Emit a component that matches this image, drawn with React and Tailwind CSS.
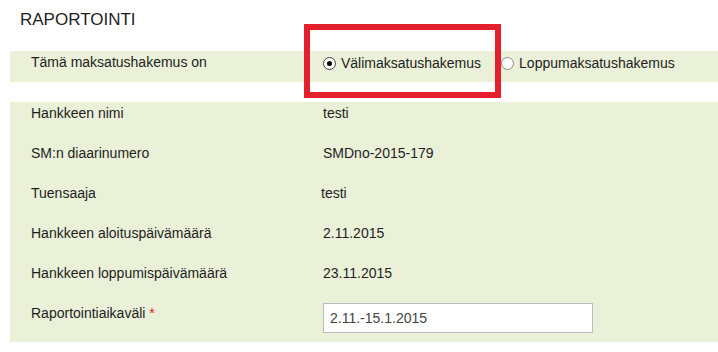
import React from 'react';

const rows = [
  { label: 'Hankkeen nimi', value: 'testi' },
  { label: 'SM:n diaarinumero', value: 'SMDno-2015-179' },
  { label: 'Tuensaaja', value: 'testi', shift: true },
  { label: 'Hankkeen aloituspäivämäärä', value: '2.11.2015' },
  { label: 'Hankkeen loppumispäivämäärä', value: '23.11.2015' },
];

function Radio({ checked, label, className }) {
  return (
    <label className={`flex items-center ${className || ''}`}>
      <span
        className={`flex h-[13px] w-[13px] items-center justify-center rounded-full border bg-white ${
          checked ? 'border-[#444]' : 'border-[#8c8c8c]'
        }`}
      >
        {checked && <span className="h-[5px] w-[5px] rounded-full bg-black" />}
      </span>
      <span className="ml-[5px]">{label}</span>
    </label>
  );
}

export default function App() {
  return (
    <div className="relative h-[352px] w-[718px] overflow-hidden bg-white font-['Liberation_Sans',Arial,sans-serif] text-[14px] leading-[16px] text-[#1e1e1e]">
      <h2 className="pl-[20px] pt-[10px] text-[17px] leading-[20px] font-normal">RAPORTOINTI</h2>

      {/* payment type */}
      <div className="ml-[10px] mt-[21px] flex h-[31px] items-start bg-[#eaf1d8] pl-[21px] pt-[3px]">
        <div className="w-[292px]">Tämä maksatushakemus on</div>
        <div className="mt-[1px] flex items-center">
          <Radio checked label="Välimaksatushakemus" />
          <Radio label="Loppumaksatushakemus" className="ml-[20px]" />
        </div>
      </div>

      {/* project details */}
      <div className="ml-[10px] mt-[20px] h-[240px] bg-[#eaf1d8] pl-[21px]">
        {rows.map((r) => (
          <div key={r.label} className="flex h-[40px] items-start pt-[3px]">
            <div className="w-[292px]">{r.label}</div>
            <div className={r.shift ? '-ml-[2px]' : ''}>{r.value}</div>
          </div>
        ))}
        <div className="flex h-[40px] items-start pt-[3px]">
          <div className="w-[292px]">
            Raportointiaikaväli <span className="text-[#e0202b]">*</span>
          </div>
          <input
            readOnly
            defaultValue="2.11.-15.1.2015"
            className="-mt-[2px] h-[30px] w-[270px] border border-[#bdbdbd] bg-white px-[6px] text-[14px] text-[#444] outline-none"
          />
        </div>
      </div>

      {/* highlight box */}
      <div className="absolute left-[304px] top-[24px] h-[74px] w-[197px] border-[6px] border-[#e3202b]" />
    </div>
  );
}
